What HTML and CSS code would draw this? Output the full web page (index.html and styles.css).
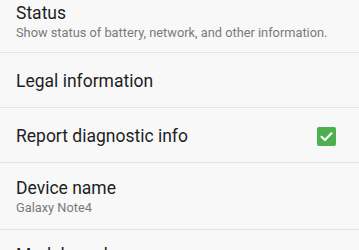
FILE: index.html
```html
<!DOCTYPE html>
<html>
<head>
<meta charset="utf-8">
<link rel="stylesheet" href="styles.css">
</head>
<body>
<div class="list">
  <div class="item two first">
    <div class="text">
      <div class="title">Status</div>
      <div class="sub">Show status of battery, network, and other information.</div>
    </div>
  </div>
  <div class="item one">
    <div class="text"><div class="title">Legal information</div></div>
  </div>
  <div class="item one">
    <div class="text"><div class="title">Report diagnostic info</div></div>
    <div class="check">
      <svg width="19" height="19" viewBox="0 0 19 19"><rect x="0" y="0" width="19" height="19" rx="2" fill="#4caf50"/><path d="M4.5 9.8 L8 13 L14.5 6.3" fill="none" stroke="#fff" stroke-width="2.2" stroke-linecap="round" stroke-linejoin="round"/></svg>
    </div>
  </div>
  <div class="item two">
    <div class="text">
      <div class="title">Device name</div>
      <div class="sub">Galaxy Note4</div>
    </div>
  </div>
  <div class="item two">
    <div class="text">
      <div class="title">Model number</div>
      <div class="sub">SM-N910F</div>
    </div>
  </div>
</div>
</body>
</html>
```
FILE: styles.css
```css
html, body {
  margin: 0;
  padding: 0;
  background: #f8f8f8;
  overflow: hidden;
}
body {
  width: 359px;
  height: 250px;
  font-family: Roboto, "Noto Sans", sans-serif;
}
.list {
  margin-top: -12px;
}
.item {
  display: flex;
  align-items: center;
  padding: 0 23px 0 16px;
  border-bottom: 1px solid #e4e4e4;
}
.item.one {
  padding-top: 18px;
  padding-bottom: 16px;
}
.item.two {
  padding-top: 15px;
  padding-bottom: 13px;
}
.item.first {
  padding-bottom: 11px;
}
.text {
  flex: 1;
}
.title {
  font-size: 17.5px;
  line-height: 20px;
  color: #1e1e1e;
}
.sub {
  margin-top: 2px;
  font-size: 12.8px;
  line-height: 16px;
  color: #7a7a7a;
}
.check {
  width: 19px;
  height: 19px;
  display: flex;
}
```
